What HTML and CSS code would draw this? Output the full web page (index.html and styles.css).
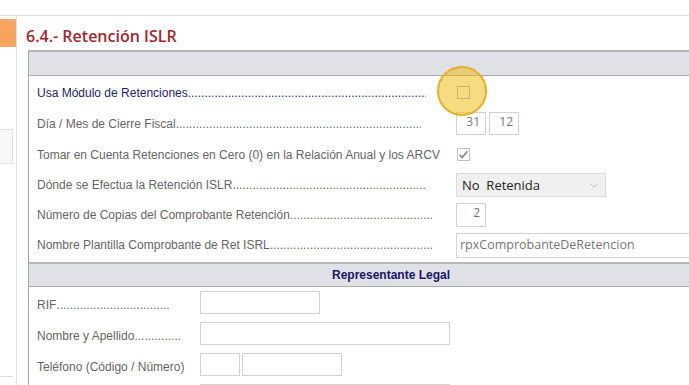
FILE: index.html
```html
<!DOCTYPE html>
<html lang="es">
<head>
  <meta charset="UTF-8" />
  <title>6.4.- Retención ISLR</title>
  <link rel="stylesheet" href="styles.css">
</head>
<body>
  <div class="topbar"></div>
  <div class="layout">
    <aside class="sidebar">
      <div class="side-active"></div>
      <div class="side-box"></div>
      <div class="side-line"></div>
    </aside>

    <main class="content">
      <h1 class="title">6.4.- Retención ISLR</h1>

      <section class="panel">
        <div class="panel-head"></div>
        <div class="rows">
          <div class="row tall">
            <span class="label strong">Usa Módulo de Retenciones<span class="dots"></span></span>
            <span class="check-wrap">
              <span class="check"></span>
              <span class="focus-ring"></span>
            </span>
          </div>
          <div class="row tall">
            <span class="label">Día / Mes de Cierre Fiscal<span class="dots short"></span></span>
            <div class="field num">31</div>
            <div class="field num">12</div>
          </div>
          <div class="row tall">
            <span class="label full">Tomar en Cuenta Retenciones en Cero (0) en la Relación Anual y los ARCV</span>
            <span class="check checked">
              <svg width="11" height="11" viewBox="0 0 11 11"><path d="M1.5 5.8 L4.2 8.4 L9.5 2.2" fill="none" stroke="#8a8a8a" stroke-width="1.7"/></svg>
            </span>
          </div>
          <div class="row">
            <span class="label">Dónde se Efectua la Retención ISLR<span class="dots"></span></span>
            <div class="select">
              <span>No&nbsp; Retenida</span>
              <svg width="8" height="5" viewBox="0 0 8 5"><path d="M1 1 L4 4 L7 1" fill="none" stroke="#c4c4c4" stroke-width="1"/></svg>
            </div>
          </div>
          <div class="row">
            <span class="label">Número de Copias del Comprobante Retención<span class="dots long"></span></span>
            <div class="field num tall-field">2</div>
          </div>
          <div class="row">
            <span class="label">Nombre Plantilla Comprobante de Ret ISRL <span class="dots long"></span></span>
            <div class="field wide">rpxComprobanteDeRetencion</div>
          </div>
        </div>
      </section>

      <section class="panel">
        <div class="panel-head sub">Representante Legal</div>
        <div class="rows second">
          <div class="row form">
            <span class="label small w-rif">RIF<span class="dots"></span></span>
            <div class="field box w120"></div>
          </div>
          <div class="row form">
            <span class="label small w-name">Nombre y Apellido<span class="dots"></span></span>
            <div class="field box w250"></div>
          </div>
          <div class="row form">
            <span class="label small">Teléfono (Código / Número)</span>
            <div class="field box w40"></div>
            <div class="field box w101"></div>
          </div>
          <div class="row form">
            <span class="label small"></span>
            <div class="field box w250"></div>
          </div>
        </div>
      </section>
    </main>
  </div>
</body>
</html>
```

FILE: styles.css
```css
body {
  margin: 0;
  background: #fff;
  font-family: "Liberation Sans", Arial, sans-serif;
  font-size: 12px;
  color: #666;
  overflow: hidden;
  height: 385px;
}
.topbar {
  height: 15px;
  border-bottom: 1px solid #dcdcdc;
}
.layout {
  display: flex;
  height: 369px;
  overflow: hidden;
}
.sidebar {
  width: 16px;
  flex-shrink: 0;
  border-right: 1px solid #e2e2e2;
  padding-top: 3px;
}
.side-active {
  height: 28px;
  background: #f6a460;
}
.side-box {
  margin-top: 82px;
  width: 12px;
  height: 33px;
  background: #f7f7f7;
  border: 1px solid #e2e2e2;
  border-left: none;
}
.side-line {
  margin-top: 212px;
  width: 13px;
  height: 1px;
  background: #dddddd;
}
.content {
  padding-left: 9px;
  flex: 1;
  min-width: 0;
  overflow: hidden;
}
.title {
  margin: 0;
  height: 34px;
  box-sizing: border-box;
  padding-top: 8px;
  line-height: 24px;
  font-family: "Open Sans", sans-serif;
  font-size: 16px;
  font-weight: 600;
  color: #a3262f;
  white-space: nowrap;
}
.panel {
  margin-left: 2px;
  width: 724px;
  border-left: 1px solid #a6a6a6;
}
.panel-head {
  height: 23px;
  border-top: 2px solid #b6b6b6;
  border-bottom: 1px solid #a9a9a9;
  background: #dfe1e6;
}
.panel-head.sub {
  height: 22px;
  line-height: 22px;
  text-align: center;
  font-weight: bold;
  color: #16166c;
}
.rows {
  padding: 1px 0 2px;
}
.rows.second {
  padding-top: 3px;
}
.row {
  display: flex;
  align-items: center;
  height: 30px;
  padding-left: 8px;
  white-space: nowrap;
}
.row.tall {
  height: 31px;
}
.row.form {
  height: 31px;
  align-items: flex-start;
}
.label {
  display: flex;
  width: 419px;
  padding-right: 30px;
  box-sizing: border-box;
  flex-shrink: 0;
}
.label.full {
  padding-right: 0;
}
.label.strong {
  color: #1d1d6e;
}
.label.small {
  width: 163px;
  line-height: 31px;
  padding-right: 0;
}
.label.w-rif {
  padding-right: 30px;
}
.label.w-name {
  padding-right: 19px;
}
.dots {
  flex: 1;
  overflow: hidden;
}
.dots::after {
  content: "........................................................................................................................................";
}
.dots.short {
  margin-right: 5px;
}
.dots.long {
  margin-right: -6px;
}
.check-wrap {
  position: relative;
  display: inline-flex;
  margin-left: 1px;
}
.check {
  display: inline-flex;
  align-items: center;
  justify-content: center;
  width: 13px;
  height: 13px;
  box-sizing: border-box;
  border: 1px solid #a9a9a9;
  background: #fff;
}
.check.checked {
  margin-left: 1px;
  border-color: #c2c2c2;
}
.focus-ring {
  position: absolute;
  left: -20px;
  top: -20px;
  width: 50px;
  height: 50px;
  box-sizing: border-box;
  border-radius: 50%;
  border: 2px solid #e4b02a;
  background: rgba(238, 190, 30, 0.55);
}
.field {
  height: 23px;
  box-sizing: border-box;
  border: 1px solid #d2d2d2;
  background: #fff;
  font-family: "Open Sans", sans-serif;
  font-size: 12px;
  color: #777;
}
.field.num {
  width: 30px;
  margin-right: 3px;
  text-align: right;
  padding-right: 5px;
  line-height: 17px;
}
.field.tall-field {
  height: 24px;
}
.field.wide {
  width: 260px;
  height: 25px;
  line-height: 22px;
  padding-left: 3px;
  font-size: 12.5px;
}
.field.box {
  height: 23px;
  margin-top: 1px;
  margin-right: 2px;
}
.w40 { width: 40px; }
.w101 { width: 100px; }
.w120 { width: 120px; }
.w250 { width: 250px; }
.select {
  display: flex;
  align-items: center;
  justify-content: space-between;
  width: 150px;
  height: 24px;
  box-sizing: border-box;
  padding: 0 7px 0 5px;
  border: 1px solid #dcdcdc;
  background: #f0f0f0;
  font-family: "Open Sans", sans-serif;
  font-size: 13px;
  color: #222;
}
```
